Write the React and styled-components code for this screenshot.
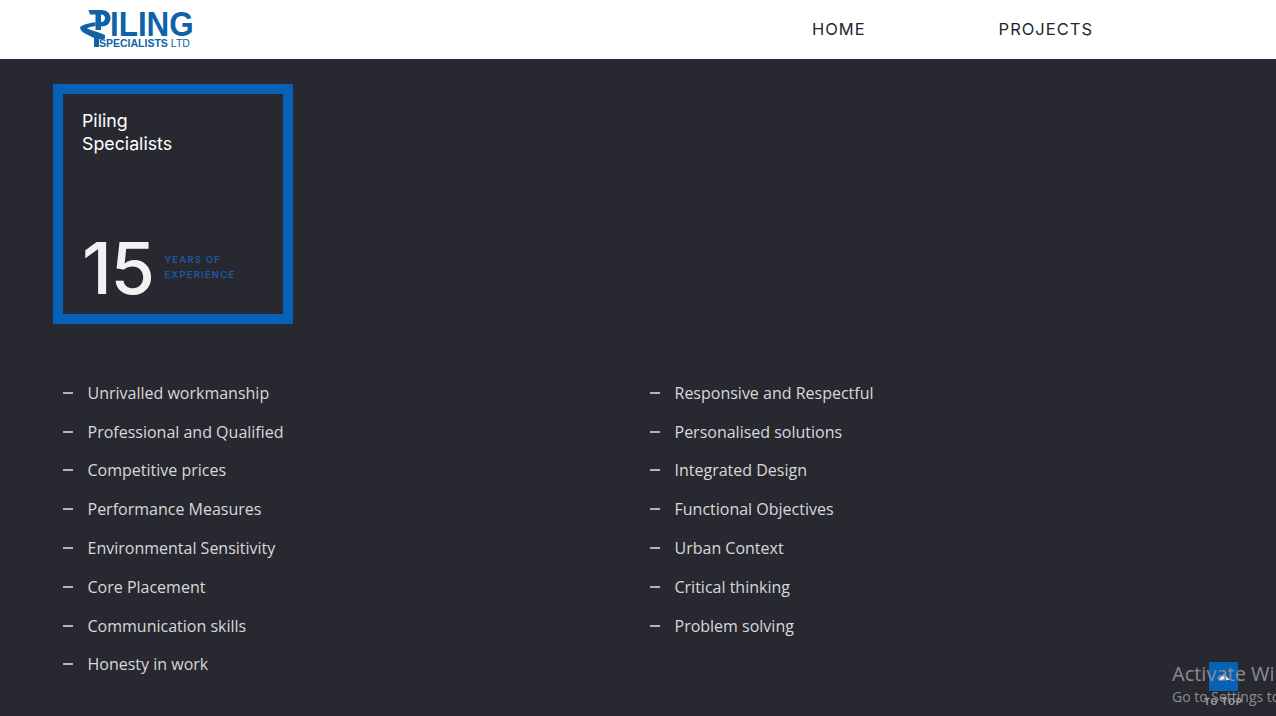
import React from "react";
import styled, { createGlobalStyle } from "styled-components";

const leftItems = [
  "Unrivalled workmanship",
  "Professional and Qualified",
  "Competitive prices",
  "Performance Measures",
  "Environmental Sensitivity",
  "Core Placement",
  "Communication skills",
  "Honesty in work",
];

const rightItems = [
  "Responsive and Respectful",
  "Personalised solutions",
  "Integrated Design",
  "Functional Objectives",
  "Urban Context",
  "Critical thinking",
  "Problem solving",
];

const Global = createGlobalStyle`
  html, body { margin: 0; height: 100%; background: #282930; overflow: hidden; }
  body { font-family: "Open Sans", sans-serif; }
`;

const Page = styled.div`
  height: 716px;
  position: relative;
  overflow: hidden;
  background: #282930;
`;

const Header = styled.header`
  box-sizing: border-box;
  height: 59px;
  background: #fff;
  display: flex;
  align-items: flex-start;
  padding: 0 183px 0 79px;
`;

const Logo = styled.div`
  display: flex;
  align-items: flex-start;
  padding-top: 8px;
`;

const LogoMark = styled.svg`
  width: 34px;
  height: 40px;
  flex: none;
`;

const LogoText = styled.div`
  margin-left: -3px;
  display: flex;
  flex-direction: column;
  color: #0f62a8;
  font-family: "Liberation Sans", Arial, sans-serif;
  font-weight: 700;
`;

const LogoMain = styled.span`
  font-size: 34.5px;
  line-height: 25px;
  height: 25px;
  margin-top: 3.5px;
  transform: scaleX(0.91);
  transform-origin: left center;
`;

const LogoSub = styled.span`
  font-size: 10.5px;
  line-height: 11px;
  margin-top: 1.5px;
  margin-left: -11px;
  white-space: nowrap;
`;

const LogoLtd = styled.span`
  font-weight: 400;
  margin-left: 3px;
`;

const Nav = styled.nav`
  display: flex;
  gap: 133px;
  margin-left: auto;
  padding-top: 19px;
`;

const NavLink = styled.a`
  font-family: Inter, sans-serif;
  font-size: 16.5px;
  letter-spacing: 1px;
  color: #25262c;
  line-height: 20px;
`;

const Main = styled.main`
  padding: 25px 0 0 53px;
`;

const Badge = styled.section`
  box-sizing: border-box;
  width: 240px;
  height: 240px;
  border: 10px solid #0562b6;
  padding: 15px 19px 16px;
  display: flex;
  flex-direction: column;
  justify-content: space-between;
`;

const BadgeTitle = styled.h2`
  margin: 0;
  font-family: Inter, sans-serif;
  font-weight: 400;
  font-size: 17.8px;
  line-height: 23px;
  color: #fff;
`;

const Years = styled.div`
  display: flex;
  align-items: center;
`;

const YearsNumber = styled.span`
  font-family: Inter, sans-serif;
  font-weight: 500;
  font-size: 72px;
  line-height: 60px;
  letter-spacing: -1.5px;
  color: #f1f1f2;
`;

const YearsLabel = styled.span`
  margin-left: 11px;
  margin-top: -3px;
  font-family: Inter, sans-serif;
  font-weight: 600;
  font-size: 9.5px;
  line-height: 15px;
  letter-spacing: 1.2px;
  color: #1b5aa3;
`;

const Columns = styled.div`
  display: grid;
  grid-template-columns: 587px 587px;
  margin: 49.4px 0 0 10px;
`;

const List = styled.ul`
  list-style: none;
  margin: 0;
  padding: 0;
`;

const Item = styled.li`
  display: flex;
  align-items: center;
  height: 38.8px;
  font-size: 16px;
  color: #d8d8da;
`;

const Dash = styled.span`
  width: 10px;
  height: 2px;
  background: #b4b4b7;
  margin-right: 14.5px;
  flex: none;
`;

const Watermark = styled.div`
  position: absolute;
  left: 1172px;
  top: 661px;
  width: 104px;
  overflow: hidden;
  white-space: nowrap;
  color: #8b8c90;
`;

const WatermarkTitle = styled.div`
  font-size: 20px;
  line-height: 26px;
`;

const WatermarkSub = styled.div`
  font-size: 14px;
  line-height: 20px;
`;

const ToTop = styled.a`
  position: absolute;
  left: 1209px;
  top: 662px;
  width: 29px;
  height: 29px;
  background: #0562b6;
  display: flex;
  align-items: center;
  justify-content: center;
`;

const ToTopArrow = styled.span`
  width: 0;
  height: 0;
  border-left: 6px solid transparent;
  border-right: 6px solid transparent;
  border-bottom: 6px solid #f0f0f0;
`;

const ToTopLabel = styled.span`
  position: absolute;
  left: 1204px;
  top: 696px;
  font-family: Inter, sans-serif;
  font-size: 9px;
  font-weight: 700;
  line-height: 12px;
  letter-spacing: 0.9px;
  color: #a0a1a5;
  white-space: nowrap;
`;

function ChecklistColumn({ items }) {
  return (
    <List>
      {items.map((item) => (
        <Item key={item}>
          <Dash />
          {item}
        </Item>
      ))}
    </List>
  );
}

export default function App() {
  return (
    <Page>
      <Global />
      <Header>
        <Logo>
          <LogoMark viewBox="79 8 34 40">
            <path
              d="M88.500 10H101C107 10 110.500 13.500 110.500 18C110.500 23 107 26.500 101 26.500V22C103.500 22 105 20.500 105 18C105 15.800 103.500 14.500 101 14.500V30H95.500V14.500H90Z"
              fill="#0f62a8"
            />
            <path d="M94 36H99V47H94Z" fill="#0f62a8" />
            <path
              d="M80 27C84 24 91 23 95.500 22V26C92 26.500 88 27.500 87 28.500C90 30 99 32 105 35V38.500C98 41 92 37 85 33.500C82 32 80 30 80 27Z"
              fill="#0f62a8"
            />
          </LogoMark>
          <LogoText>
            <LogoMain>ILING</LogoMain>
            <LogoSub>
              SPECIALISTS<LogoLtd>LTD</LogoLtd>
            </LogoSub>
          </LogoText>
        </Logo>
        <Nav>
          <NavLink>HOME</NavLink>
          <NavLink>PROJECTS</NavLink>
        </Nav>
      </Header>
      <Main>
        <Badge>
          <BadgeTitle>
            Piling
            <br />
            Specialists
          </BadgeTitle>
          <Years>
            <YearsNumber>15</YearsNumber>
            <YearsLabel>
              YEARS OF
              <br />
              EXPERIENCE
            </YearsLabel>
          </Years>
        </Badge>
        <Columns>
          <ChecklistColumn items={leftItems} />
          <ChecklistColumn items={rightItems} />
        </Columns>
      </Main>
      <ToTop>
        <ToTopArrow />
      </ToTop>
      <Watermark>
        <WatermarkTitle>Activate Windows</WatermarkTitle>
        <WatermarkSub>Go to Settings to activate Windows.</WatermarkSub>
      </Watermark>
      <ToTopLabel>TO TOP</ToTopLabel>
    </Page>
  );
}
